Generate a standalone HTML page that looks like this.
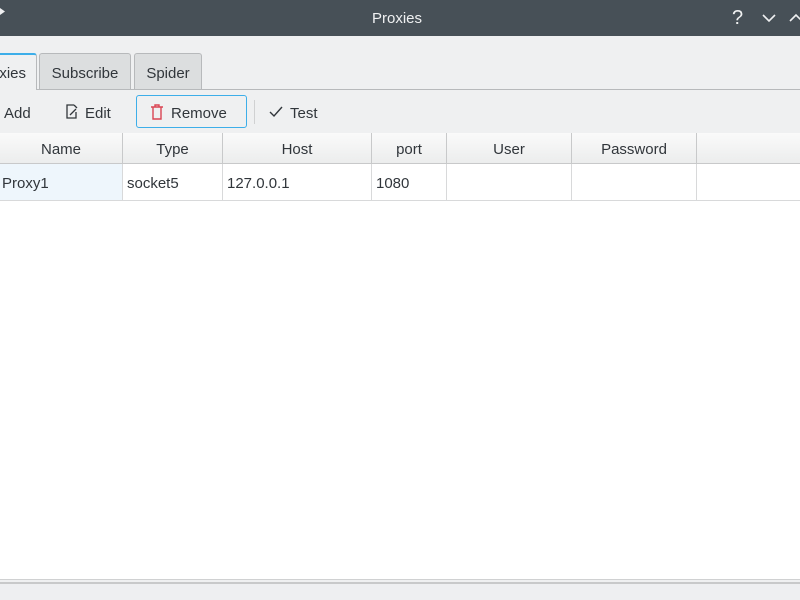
<!DOCTYPE html>
<html><head><style>
body{margin:0;width:800px;height:600px;overflow:hidden;background:#eff0f1;font-family:"Liberation Sans","DejaVu Sans",sans-serif;font-size:15px;color:#31363b;position:relative}
.a{position:absolute}
#title{left:0;top:0;width:800px;height:36px;background:#475057;color:#eff0f1;}
.tab{top:53px;height:36px;border:1px solid #b7b9bb;border-bottom:none;background:#dcdedf;box-sizing:border-box;text-align:center;line-height:40px;border-radius:3px 3px 0 0}
.hd{top:133px;height:31px;background:linear-gradient(#fafafa,#eceded);border-right:1px solid #c8c9ca;border-bottom:1px solid #c8c9ca;box-sizing:border-box;text-align:center;line-height:34px}
.cell{top:164px;height:37px;border-right:1px solid #d8d9da;border-bottom:1px solid #d8d9da;box-sizing:border-box;line-height:40px;padding-left:4px}
</style></head><body>
<div id="title" class="a">
<div class="a" style="left:0;top:8px;width:5px;height:7px;background:#eff0f1;clip-path:polygon(0 0,100% 50%,0 100%)"></div>
<div class="a" style="left:-3px;width:800px;top:10px;text-align:center;font-size:15px">Proxies</div>
<div class="a" style="left:732px;top:7px;font-size:20px">?</div>
<svg class="a" style="left:761px;top:12px" width="16" height="12"><path d="M2 3l6 6 6-6" stroke="#eff0f1" stroke-width="1.6" fill="none"/></svg>
<svg class="a" style="left:788px;top:12px" width="12" height="12"><path d="M2 9l6-6 6 6" stroke="#eff0f1" stroke-width="1.6" fill="none"/></svg>
</div>
<div class="a" style="left:0;top:89px;width:800px;height:1px;background:#b7b9bb"></div>
<div class="a tab" style="left:-10px;width:47px;background:#eff0f1;height:37px;border-top:2px solid #3daee9;line-height:38px;text-align:right;padding-right:10px">xies</div>
<div class="a tab" style="left:39px;width:92px">Subscribe</div>
<div class="a tab" style="left:134px;width:68px">Spider</div>
<div class="a" style="left:4px;top:105px">Add</div>
<svg class="a" style="left:65px;top:104px" width="14" height="16"><path d="M9 1H2v13h9V8M9 1l3 3M5 11l6-6" stroke="#31363b" stroke-width="1.3" fill="none"/></svg>
<div class="a" style="left:85px;top:105px">Edit</div>
<div class="a" style="left:136px;top:95px;width:111px;height:33px;border:1px solid #3daee9;border-radius:3px;box-sizing:border-box;background:#eff0f1"></div>
<svg class="a" style="left:149px;top:103px" width="16" height="18"><path d="M2 4h12M6 4V2h4v2M4 4v12h8V4" stroke="#da4453" stroke-width="1.4" fill="none"/></svg>
<div class="a" style="left:171px;top:105px">Remove</div>
<div class="a" style="left:254px;top:100px;width:1px;height:24px;background:#d0d1d2"></div>
<svg class="a" style="left:268px;top:105px" width="16" height="14"><path d="M2 7l4 4 8-9" stroke="#31363b" stroke-width="1.4" fill="none"/></svg>
<div class="a" style="left:290px;top:105px">Test</div>
<div class="a" style="left:0;top:133px;width:800px;height:446px;background:#fff"></div>
<div class="a hd" style="left:0;width:123px">Name</div>
<div class="a hd" style="left:123px;width:100px">Type</div>
<div class="a hd" style="left:223px;width:149px">Host</div>
<div class="a hd" style="left:372px;width:75px">port</div>
<div class="a hd" style="left:447px;width:125px">User</div>
<div class="a hd" style="left:572px;width:125px">Password</div>
<div class="a hd" style="left:697px;width:103px;border-right:none"></div>
<div class="a cell" style="left:0;width:123px;padding-left:2px;background:#eef6fc">Proxy1</div>
<div class="a cell" style="left:123px;width:100px">socket5</div>
<div class="a cell" style="left:223px;width:149px">127.0.0.1</div>
<div class="a cell" style="left:372px;width:75px">1080</div>
<div class="a cell" style="left:447px;width:125px"></div>
<div class="a cell" style="left:572px;width:125px"></div>
<div class="a cell" style="left:697px;width:103px;border-right:none"></div>
<div class="a" style="left:0;top:579px;width:800px;height:1px;background:#d0d1d2"></div>
<div class="a" style="left:0;top:582px;width:800px;height:2px;background:#c8c9ca"></div>
<div class="a" style="left:0;top:584px;width:800px;height:16px;background:#eeeff1"></div>
</body></html>
